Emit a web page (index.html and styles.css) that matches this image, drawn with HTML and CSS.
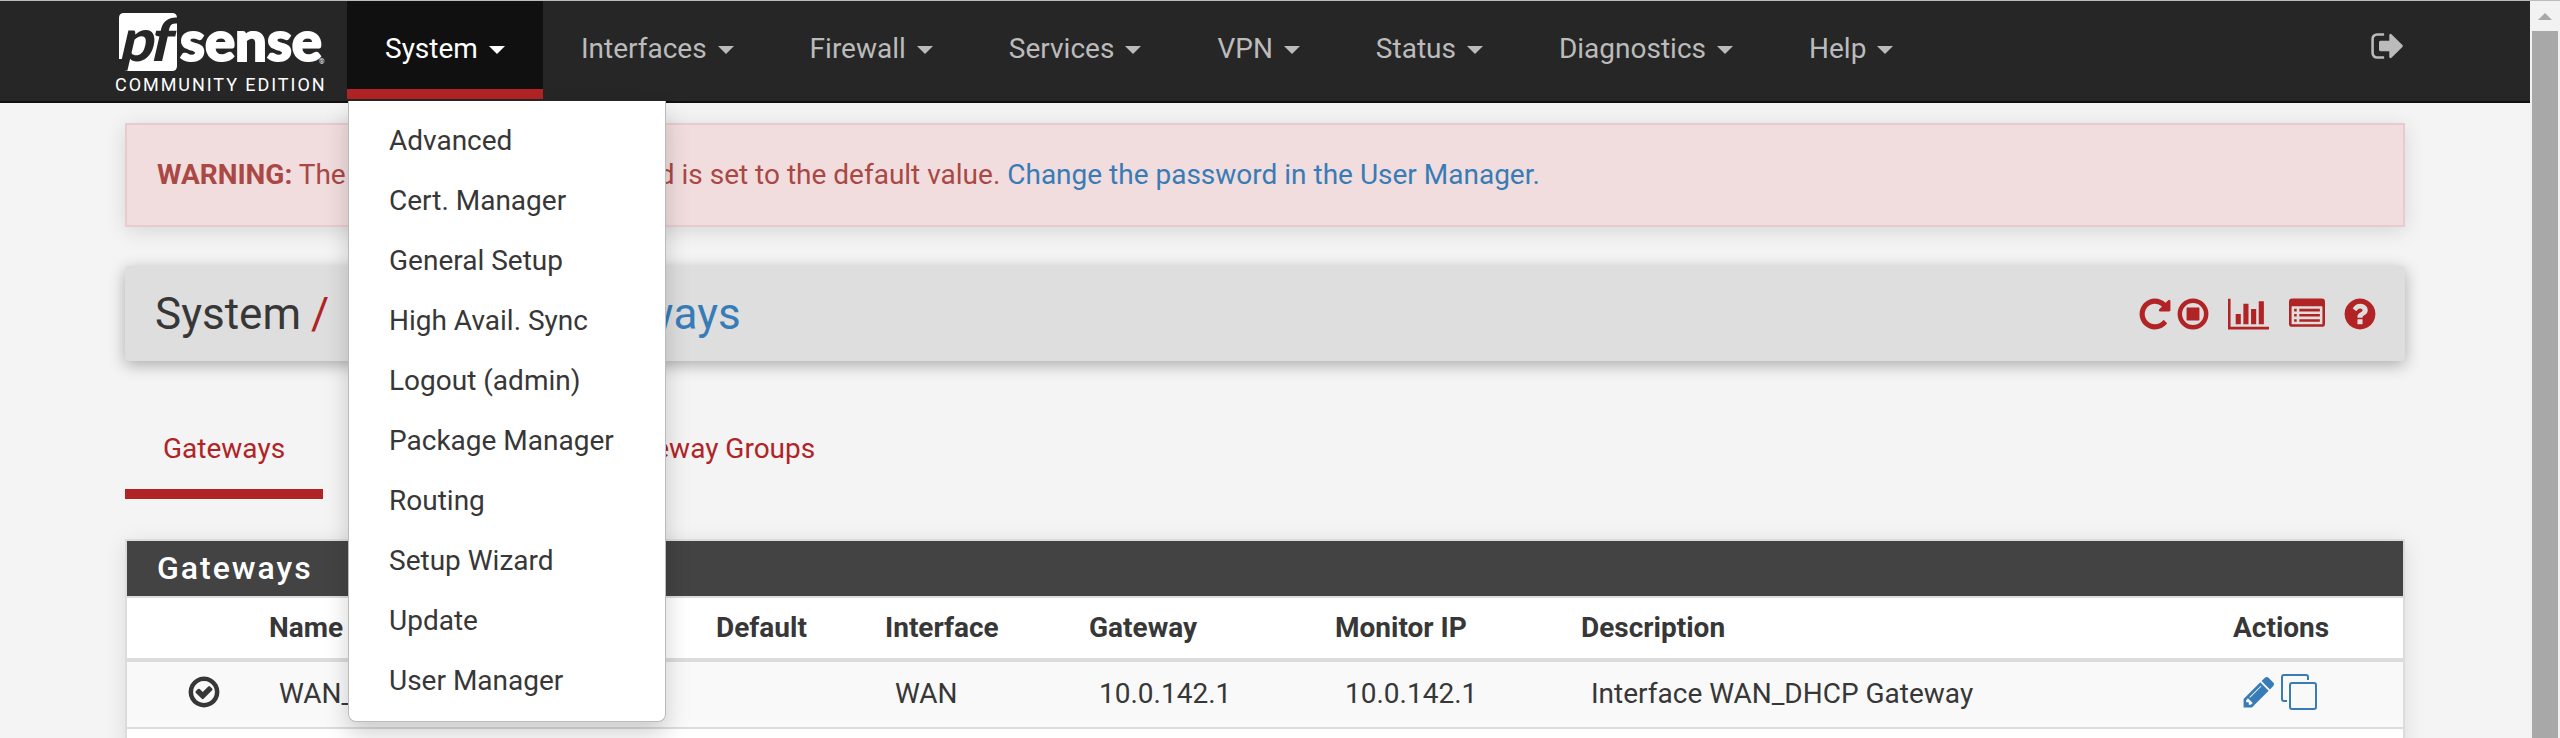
FILE: index.html
```html
<!DOCTYPE html>
<html lang="en">
<head>
<meta charset="utf-8">
<title>System: Gateways</title>
<link rel="stylesheet" href="styles.css">
</head>
<body>
<div class="page">
  <header class="navbar">
    <a class="brand">
      <svg class="brand-logo" viewBox="0 0 208 60" width="208" height="60">
        <path fill="#fff" d="M5 0H53q5 0 5 5V53q0 5-5 5H6L9 46H0V5Q0 0 5 0z"/>
        <text class="logo-pf" transform="translate(-1 48) skewX(-13)" textLength="34" lengthAdjust="spacingAndGlyphs">p</text>
        <text class="logo-pf" transform="translate(29 48) skewX(-13)" textLength="22" lengthAdjust="spacingAndGlyphs">f</text>
        <text class="logo-sense" x="61" y="48" textLength="142" lengthAdjust="spacingAndGlyphs">sense</text>
        <text class="logo-reg" x="200" y="51">®</text>
      </svg>
      <span class="brand-edition">COMMUNITY EDITION</span>
    </a>
    <nav class="menu">
      <div class="menu-item active">System<i class="caret"></i>
        <div class="dropdown">
          <a>Advanced</a><a>Cert. Manager</a><a>General Setup</a><a>High Avail. Sync</a><a>Logout (admin)</a><a>Package Manager</a><a>Routing</a><a>Setup Wizard</a><a>Update</a><a>User Manager</a>
        </div>
      </div>
      <div class="menu-item">Interfaces<i class="caret"></i></div>
      <div class="menu-item">Firewall<i class="caret"></i></div>
      <div class="menu-item">Services<i class="caret"></i></div>
      <div class="menu-item">VPN<i class="caret"></i></div>
      <div class="menu-item">Status<i class="caret"></i></div>
      <div class="menu-item">Diagnostics<i class="caret"></i></div>
      <div class="menu-item">Help<i class="caret"></i></div>
    </nav>
    <svg class="icon logout" viewBox="0 0 1792 1792"><path d="M704 1440q0 4 1 20t.5 26.5-3 23.5-10 19.5-20.5 6.5h-320q-119 0-203.5-84.5t-84.5-203.5v-704q0-119 84.5-203.5t203.5-84.5h320q13 0 22.5 9.5t9.5 22.5q0 4 1 20t.5 26.5-3 23.5-10 19.5-20.5 6.5h-320q-66 0-113 47t-47 113v704q0 66 47 113t113 47h312l11.5 1 11.5 3 8 5.5 7 9 2 13.5zm928-544q0 26-19 45l-544 544q-19 19-45 19t-45-19-19-45v-288h-448q-26 0-45-19t-19-45v-384q0-26 19-45t45-19h448v-288q0-26 19-45t45-19 45 19l544 544q19 19 19 45z"/></svg>
  </header>

  <main class="content">
    <div class="alert"><p><strong>WARNING:</strong> The 'admin' account password is set to the default value. <a>Change the password in the User Manager.</a></p></div>

    <div class="title-bar">
      <h1 class="crumbs"><span>System</span><span class="sep">/</span><span>Routing</span><span class="sep">/</span><a>Gateways</a></h1>
      <div class="tools">
        <svg class="icon" viewBox="0 0 1792 1792"><path d="M1664 256v448q0 26-19 45t-45 19h-448q-42 0-59-40-17-39 14-69l138-138q-148-137-349-137-104 0-198.500 40.500t-163.500 109.500-109.500 163.500-40.500 198.500 40.500 198.500 109.500 163.500 163.500 109.500 198.500 40.500q119 0 225-52t179-147q7-10 23-12 15 0 25 9l137 138q9 8 9.500 20.500t-7.500 22.500q-109 132-264 204.500t-327 72.500q-156 0-298-61t-245-164-164-245-61-298 61-298 164-245 245-164 298-61q147 0 284.500 55.500t244.500 156.500l130-129q29-31 70-14 39 17 39 59z"/></svg>
        <svg class="icon icon-stop" viewBox="0 0 1792 1792"><path fill-rule="evenodd" d="M896 128a768 768 0 1 1 0 1536a768 768 0 1 1 0-1536zM896 352a544 544 0 1 0 0 1088a544 544 0 1 0 0-1088zM608 576h576q32 0 32 32v576q0 32-32 32h-576q-32 0-32-32v-576q0-32 32-32z"/></svg>
        <svg class="icon icon-chart" viewBox="0 0 2048 1792"><path d="M640 896v512h-256v-512h256zm384-512v1024h-256v-1024h256zm1024 1152v128h-2048v-1536h128v1408h1920zm-640-896v768h-256v-768h256zm384-384v1152h-256v-1152h256z"/></svg>
        <svg class="icon icon-list" viewBox="0 0 1792 1792"><path fill-rule="evenodd" d="M160 128h1472q160 0 160 160v1088q0 160-160 160h-1472q-160 0-160-160v-1088q0-160 160-160zM160 512q-32 0-32 32v832q0 32 32 32h1472q32 0 32-32v-832q0-32-32-32zM256 640h128v128h-128zM512 640h1024v128h-1024zM256 896h128v128h-128zM512 896h1024v128h-1024zM256 1152h128v128h-128zM512 1152h1024v128h-1024z"/></svg>
        <svg class="icon icon-help" viewBox="0 0 1792 1792"><path d="M1024 1376v-192q0-14-9-23t-23-9h-192q-14 0-23 9t-9 23v192q0 14 9 23t23 9h192q14 0 23-9t9-23zm256-672q0-88-55.500-163t-138.500-116-170-41q-243 0-371 213-15 24 8 42l132 100q7 6 19 6 16 0 25-12 53-68 86-92 34-24 86-24 48 0 85.500 26t37.500 59q0 38-20 61t-68 45q-63 28-115.500 86.500t-52.500 125.500v36q0 14 9 23t23 9h192q14 0 23-9t9-23q0-19 21.500-49.500t54.500-49.500q32-18 49-28.500t46-35 44.500-48 28-60.500 12.500-81zm384 192q0 209-103 385.500t-279.500 279.500-385.500 103-385.500-103-279.500-279.500-103-385.500 103-385.500 279.500-279.500 385.500-103 385.500 103 279.500 279.500 103 385.500z"/></svg>
      </div>
    </div>

    <div class="tabs"><a class="tab current">Gateways</a><a class="tab">Static Routes</a><a class="tab">Gateway Groups</a></div>

    <section class="panel">
      <h2 class="panel-heading">Gateways</h2>
      <div class="row head"><span></span><span>Name</span><span>Default</span><span>Interface</span><span>Gateway</span><span>Monitor IP</span><span>Description</span><span>Actions</span></div>
      <div class="row body">
        <span class="status"><svg class="icon" viewBox="0 0 1792 1792"><path d="M1299 813l-422 422q-19 19-45 19t-45-19l-294-294q-19-19-19-45t19-45l102-102q19-19 45-19t45 19l147 147 275-275q19-19 45-19t45 19l102 102q19 19 19 45t-19 45zm141 83q0-148-73-273t-198-198-273-73-273 73-198 198-73 273 73 273 198 198 273 73 273-73 198-198 73-273zm224 0q0 209-103 385.500t-279.500 279.500-385.500 103-385.500-103-279.500-279.500-103-385.500 103-385.500 279.500-279.500 385.500-103 385.500 103 279.500 279.500 103 385.500z"/></svg></span>
        <span>WAN_DHCP</span><span></span><span>WAN</span><span>10.0.142.1</span><span>10.0.142.1</span><span>Interface WAN_DHCP Gateway</span>
        <span class="actions"><svg class="icon" viewBox="0 0 1792 1792"><path d="M491 1536l91-91-235-235-91 91v107h128v128h107zm523-928q0-22-22-22-10 0-17 7l-542 542q-7 7-7 17 0 22 22 22 10 0 17-7l542-542q7-7 7-17zm-54-192l416 416-832 832h-416v-416zm683 96q0 53-37 90l-166 166-416-416 166-165q36-38 90-38 53 0 91 38l235 234q37 39 37 91z"/></svg><svg class="icon icon-clone" viewBox="0 0 36 36"><g fill="none" stroke="currentColor" stroke-width="2"><rect x="9" y="9" width="26" height="26" rx="2"/><path d="M27 6V3Q27 1 25 1H3Q1 1 1 3V25Q1 27 3 27H6"/></g></svg></span>
      </div>
    </section>
  </main>
  <div class="scrollbar"><div class="scroll-arrow"></div><div class="scroll-thumb"></div></div>
</div>
</body>
</html>
```
FILE: styles.css
```css
* { box-sizing: border-box; }
body { margin: 0; font: 28px/40px Roboto, sans-serif; color: #373737; background: #f4f4f4; }
h1, h2, p { margin: 0; font-weight: 400; }
a { color: #387cb7; }

.page {
  display: grid;
  grid-template-columns: 2530px 30px;
  grid-template-rows: 102px 635px;
  height: 738px;
  overflow: hidden;
  border-top: 1px solid #b9bdc0;
}
.icon { display: block; width: 36px; height: 36px; fill: currentColor; flex: none; }

.navbar {
  display: flex;
  position: relative;
  z-index: 2;
  background: #262626;
  border-bottom: 2px solid #101010;
}
.brand { display: flex; flex-direction: column; width: 232px; margin-left: 115px; padding-top: 12px; color: #fff; }
.brand-logo { margin-left: 4px; overflow: visible; }
.logo-pf { font: 900 59px Lato, sans-serif; fill: #262626; }
.logo-sense { font: 900 55px Lato, sans-serif; fill: #fff; stroke: #fff; stroke-width: 2px; }
.logo-reg { font: 7px Roboto, sans-serif; fill: #fff; }
.brand-edition { font-size: 18px; line-height: 24px; letter-spacing: 1.95px; white-space: nowrap; }
.menu { display: flex; flex: 1; }
.menu-item {
  display: flex;
  align-items: center;
  position: relative;
  height: 98px;
  padding: 8px 38px 0;
  color: #bbb;
  border-bottom: 10px solid transparent;
}
.menu-item.active { color: #fff; background: #101010; border-color: #b12325; }
.caret { margin: 2px 0 0 11px; border: 8px solid transparent; border-top-color: currentColor; border-bottom: 0; }
.logout { margin: 27px 124px 0 0; color: #bbb; }
.dropdown {
  position: absolute;
  top: 100px;
  left: 1px;
  width: 318px;
  padding: 10px 0;
  background: #fff;
  border: 1px solid #bbb;
  border-top: 0;
  border-radius: 0 0 8px 8px;
  box-shadow: 0 12px 24px rgba(0,0,0,.18);
}
.dropdown a { display: block; padding: 10px 40px; color: #373737; }

.content { padding: 20px 125px 0; }
.alert {
  height: 104px;
  padding: 30px;
  color: #a94845;
  background: #f1dddd;
  border: 2px solid #e9cbcf;
  box-shadow: 0 4px 20px rgba(0,0,0,.12);
}
.title-bar {
  display: flex;
  align-items: center;
  justify-content: space-between;
  height: 95px;
  margin-top: 39px;
  padding: 0 27px 0 30px;
  background: #dedede;
  border-radius: 4px;
  box-shadow: 0 4px 16px rgba(0,0,0,.3);
}
.crumbs { display: flex; gap: 10px; font-size: 44px; line-height: 48px; }
.sep { margin-right: 10.5px; color: #b12325; }
.tools { display: flex; color: #b12325; }
.icon-stop { margin-left: 2px; }
.icon-chart { width: 41px; margin-left: 17px; }
.icon-list { margin-left: 20px; }
.icon-help { margin-left: 17px; }

.tabs { display: flex; gap: 4px; height: 138px; padding-top: 58px; }
.tab { height: 80px; padding: 10px 38px 0; color: #b12325; border-bottom: 10px solid transparent; }
.tab.current { border-color: #b12325; }

.panel {
  height: 260px;
  margin-top: 40px;
  background: #fff;
  border: 2px solid #dcdcdc;
  box-shadow: 0 4px 20px rgba(0,0,0,.1);
}
.panel-heading {
  height: 57px;
  padding-left: 30px;
  color: #fff;
  background: #434343;
  border-bottom: 2px solid #dcdcdc;
  font-size: 32px;
  font-weight: 500;
  line-height: 55px;
  letter-spacing: 2px;
}
.row {
  display: grid;
  grid-template-columns: 142px 447px 169px 204px 246px 246px 652px auto;
  align-items: center;
}
.head { height: 64px; border-bottom: 4px solid #dcdcdc; font-weight: 700; }
.body { height: 67px; padding-bottom: 2px; background: #f9f9f9; border-bottom: 2px solid #dcdcdc; }
.body > span { padding-left: 10px; }
.body > .status { padding: 0 0 3px 59px; }
.body > .actions { display: flex; padding: 0 0 3px 8px; color: #387cb7; }
.icon-clone { margin-left: 4px; }

.scrollbar { display: flex; flex-direction: column; align-items: center; grid-column: 2; grid-row: 1 / 3; background: #f2f2f2; }
.scroll-arrow { margin: 12px 0 11px; border: 7px solid transparent; border-top: 0; border-bottom-color: #a8a8a8; }
.scroll-thumb { flex: 1; width: 26px; background: #a8a8a8; }
```
